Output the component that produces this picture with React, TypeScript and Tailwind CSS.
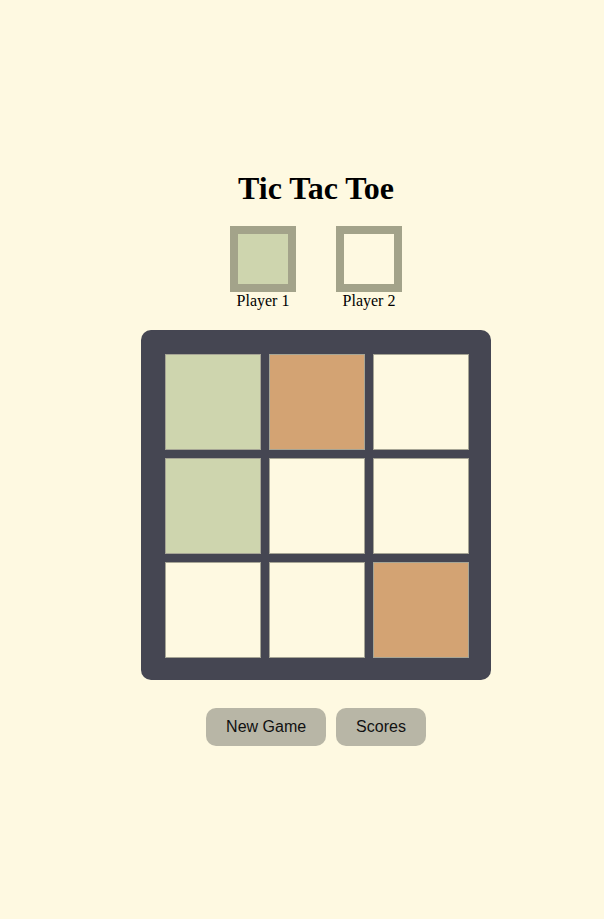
/** 井字棋页面。 */

type Mark = 'x' | 'o' | null

const board: Mark[] = ['x', 'o', null, 'x', null, null, null, null, 'o']

const cellColor: Record<string, string> = {
  x: 'bg-[#ced5ae]',
  o: 'bg-[#d3a373]',
  empty: 'bg-[#fef9e1]',
}

function PlayerBadge({ label, active }: { label: string; active?: boolean }) {
  return (
    <div className="flex flex-col items-center">
      <div
        className={`w-[66px] h-[66px] border-[8px] border-[#a3a38a] ${
          active ? 'bg-[#ced5ae]' : 'bg-[#fef9e1]'
        }`}
      ></div>
      <span className="text-[16px] leading-[18px]">{label}</span>
    </div>
  )
}

export default function App() {
  return (
    <div
      className="min-h-screen bg-[#fef9e1] text-black pl-[28px] pt-[170px] flex flex-col items-center"
      style={{ fontFamily: '"Liberation Serif", "Times New Roman", serif' }}
    >
      <h1 className="text-[32px] leading-[37px] font-bold">Tic Tac Toe</h1>

      {/* 玩家指示 */}
      <div className="mt-[19px] flex gap-[40px]">
        <PlayerBadge label="Player 1" active />
        <PlayerBadge label="Player 2" />
      </div>

      {/* 棋盘 */}
      <div className="mt-[20px] w-[350px] h-[350px] bg-[#454652] rounded-[10px] pt-[24px] pl-[24px]">
        <div className="grid grid-cols-[repeat(3,96px)] grid-rows-[repeat(3,96px)] gap-[8px]">
          {board.map((m, i) => (
            <div key={i} className={`border border-[#a6a595] ${cellColor[m ?? 'empty']}`}></div>
          ))}
        </div>
      </div>

      {/* 按钮 */}
      <div
        className="mt-[28px] flex gap-[10px]"
        style={{ fontFamily: '"Liberation Sans", Arial, sans-serif' }}
      >
        <button className="h-[38px] px-[20px] rounded-[10px] bg-[#b8b6a6] text-[16px] text-[#111]">
          New Game
        </button>
        <button className="h-[38px] px-[20px] rounded-[10px] bg-[#b8b6a6] text-[16px] text-[#111]">
          Scores
        </button>
      </div>
    </div>
  )
}
